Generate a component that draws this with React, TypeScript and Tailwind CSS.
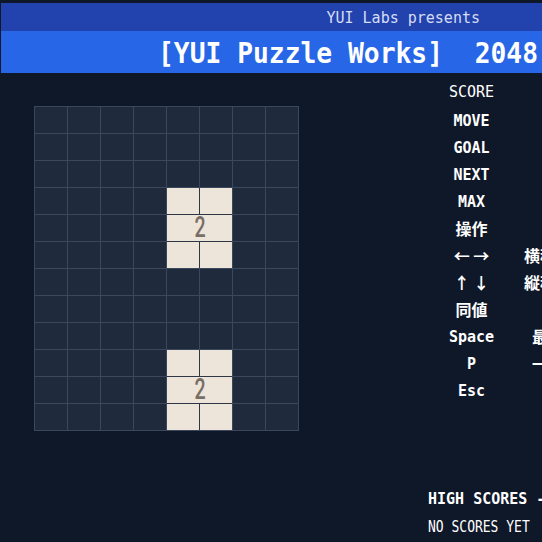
const mono = "font-['DejaVu_Sans_Mono','Noto_Sans_CJK_JP',monospace]"
const cjk = "font-['Noto_Sans_CJK_JP','DejaVu_Sans',sans-serif]"

const tiles = [
  { pos: 'col-start-5 col-span-2 row-start-4 row-span-3', value: 2 },
  { pos: 'col-start-5 col-span-2 row-start-10 row-span-3', value: 2 },
]

function Tile({ pos, value }: { pos: string; value: number }) {
  return (
    <div className={`${pos} grid grid-cols-2 grid-rows-3 gap-px bg-[#2f3645]`}>
      <div className="bg-[#ede4da]" />
      <div className="bg-[#ede4da]" />
      <div className="col-span-2 bg-[#ede4da] flex items-center justify-center">
        <span className="font-['Roboto',sans-serif] text-[28px] leading-none font-medium text-[#776e65] scale-x-[0.7] scale-y-[1.05]">
          {value}
        </span>
      </div>
      <div className="bg-[#ede4da]" />
      <div className="bg-[#ede4da]" />
    </div>
  )
}

function Board() {
  const cells = Array.from({ length: 96 - 12 })
  return (
    <div className="grid grid-cols-[repeat(8,32px)] grid-rows-[repeat(12,26px)] gap-px p-px bg-[#3a475c] w-[265px]">
      {tiles.map((t, i) => (
        <Tile key={'t' + i} pos={t.pos} value={t.value} />
      ))}
      {cells.map((_, i) => (
        <div key={i} className="bg-[#1f2a3c]" />
      ))}
    </div>
  )
}

const labels: { k: string; v?: string; cjk?: boolean }[] = [
  { k: 'MOVE' },
  { k: 'GOAL' },
  { k: 'NEXT' },
  { k: 'MAX' },
  { k: '操作', cjk: true },
  { k: '← →', v: '横移動', cjk: true },
  { k: '↑ ↓', v: '縦移動', cjk: true },
  { k: '同値', cjk: true },
  { k: 'Space', v: '最速' },
  { k: 'P', v: '一時' },
  { k: 'Esc' },
]

function Panel() {
  return (
    <div className="flex flex-col pt-[6px] text-white">
      <div className="flex h-[27px] items-center mb-[2px]">
        <div className={`w-[87px] text-center text-[15px] scale-y-110 ${mono}`}>SCORE</div>
      </div>
      {labels.map((l) => (
        <div key={l.k} className="flex h-[27px] items-center">
          <div
            className={`w-[87px] text-center whitespace-pre ${
              l.cjk ? `${cjk} text-[16px] font-bold -translate-y-[2px]` : `${mono} text-[15px] font-bold scale-y-110`
            }`}
          >
            {l.k}
          </div>
          {l.v && (
            <div className={`w-[66px] text-center whitespace-nowrap ${cjk} text-[16px] font-bold -translate-y-[2px]`}>{l.v}</div>
          )}
        </div>
      ))}
      <div className={`mt-[81px] h-[27px] flex items-center whitespace-pre text-[15px] font-bold ${mono}`}>
        <span className="scale-y-110 origin-left">HIGH SCORES -</span>
      </div>
      <div className={`h-[27px] flex items-center whitespace-pre text-[13px] ${mono}`}>
        <span className="scale-y-125 origin-left">NO SCORES YET</span>
      </div>
    </div>
  )
}

export default function App() {
  return (
    <div className="w-[542px] h-[542px] overflow-hidden bg-[#0f1829]">
      <header className="pt-[3px] pl-px">
        <div className={`h-[28px] bg-[#2243ad] flex items-center justify-end pt-[3px] pr-[62px] text-[15px] text-[#d6ddf5] whitespace-pre ${mono}`}>
          YUI Labs presents
        </div>
        <div className={`h-[42px] bg-[#2766e6] flex items-center justify-end pt-[4px] pr-[4px] text-[26.3px] font-bold text-white whitespace-pre ${mono}`}>
          <span className="scale-y-110">[YUI Puzzle Works]  2048</span>
        </div>
      </header>
      <main className="flex">
        <div className="w-[428px] shrink-0 pl-[34px] pt-[33px]">
          <Board />
        </div>
        <Panel />
      </main>
    </div>
  )
}
